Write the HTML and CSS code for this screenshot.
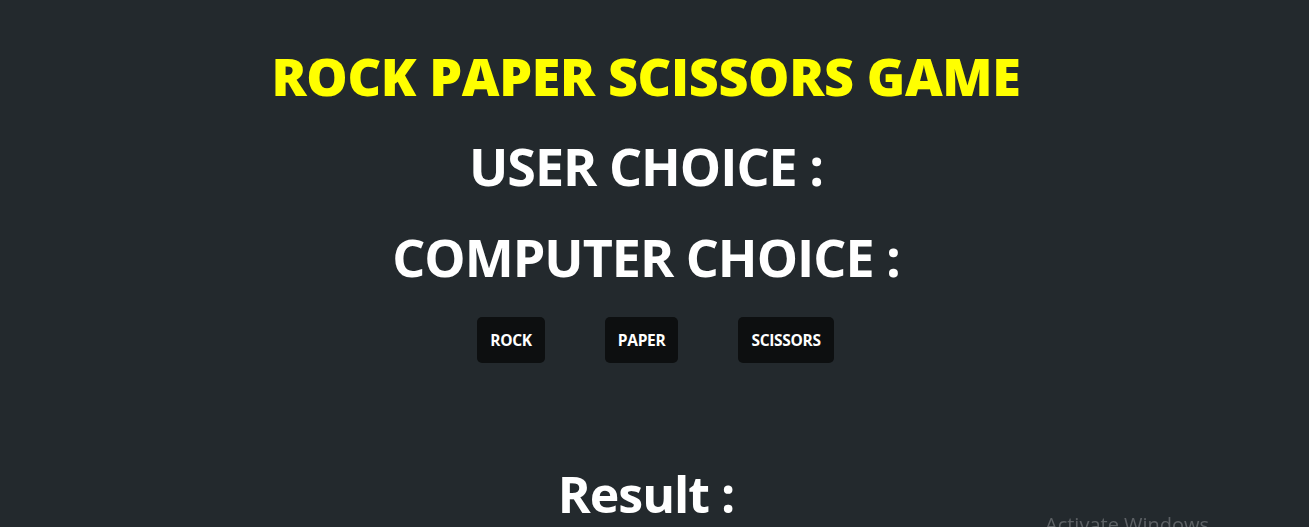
FILE: index.html
```html
<!DOCTYPE html>
<html>
<head>
<meta charset="utf-8">
<link rel="stylesheet" href="styles.css">
</head>
<body>
<main class="game">
  <h1 class="title">ROCK PAPER SCISSORS GAME</h1>
  <h2 class="choice">USER CHOICE :</h2>
  <h2 class="choice">COMPUTER CHOICE :</h2>
  <div class="buttons">
    <button class="btn">ROCK</button>
    <button class="btn">PAPER</button>
    <button class="btn">SCISSORS</button>
  </div>
  <h2 class="result">Result :</h2>
</main>
<div class="watermark">Activate Windows</div>
</body>
</html>
```
FILE: styles.css
```css
html, body {
  margin: 0;
  padding: 0;
  background: #23292d;
  height: 100%;
  overflow: hidden;
}
body {
  font-family: "Open Sans", "Noto Sans", sans-serif;
  color: #ffffff;
}
.game {
  width: 1292px;
  display: flex;
  flex-direction: column;
  align-items: center;
  padding-top: 44px;
}
.title {
  margin: 0;
  font-family: "Open Sans", sans-serif;
  font-weight: 800;
  font-size: 52px;
  letter-spacing: -0.35px;
  line-height: 64px;
  color: #ffff00;
}
.choice {
  margin: 25px 0 0;
  font-size: 52px;
  font-weight: 700;
  letter-spacing: -1px;
  line-height: 66px;
}
.buttons {
  display: flex;
  gap: 60px;
  margin-top: 27px;
  padding-left: 19px;
}
.btn {
  font-family: "Open Sans", sans-serif;
  font-weight: 700;
  font-size: 15.5px;
  letter-spacing: -0.3px;
  color: #ffffff;
  background: #0d0f10;
  border: none;
  border-radius: 5px;
  height: 46px;
  padding: 0 13px;
}
.result {
  margin: 98px 0 0;
  font-size: 50px;
  font-weight: 700;
  letter-spacing: -1px;
  line-height: 66px;
}
.watermark {
  position: fixed;
  left: 1045px;
  top: 511px;
  font-family: "Open Sans", sans-serif;
  font-size: 20px;
  color: #5c6064;
  white-space: nowrap;
}
```
